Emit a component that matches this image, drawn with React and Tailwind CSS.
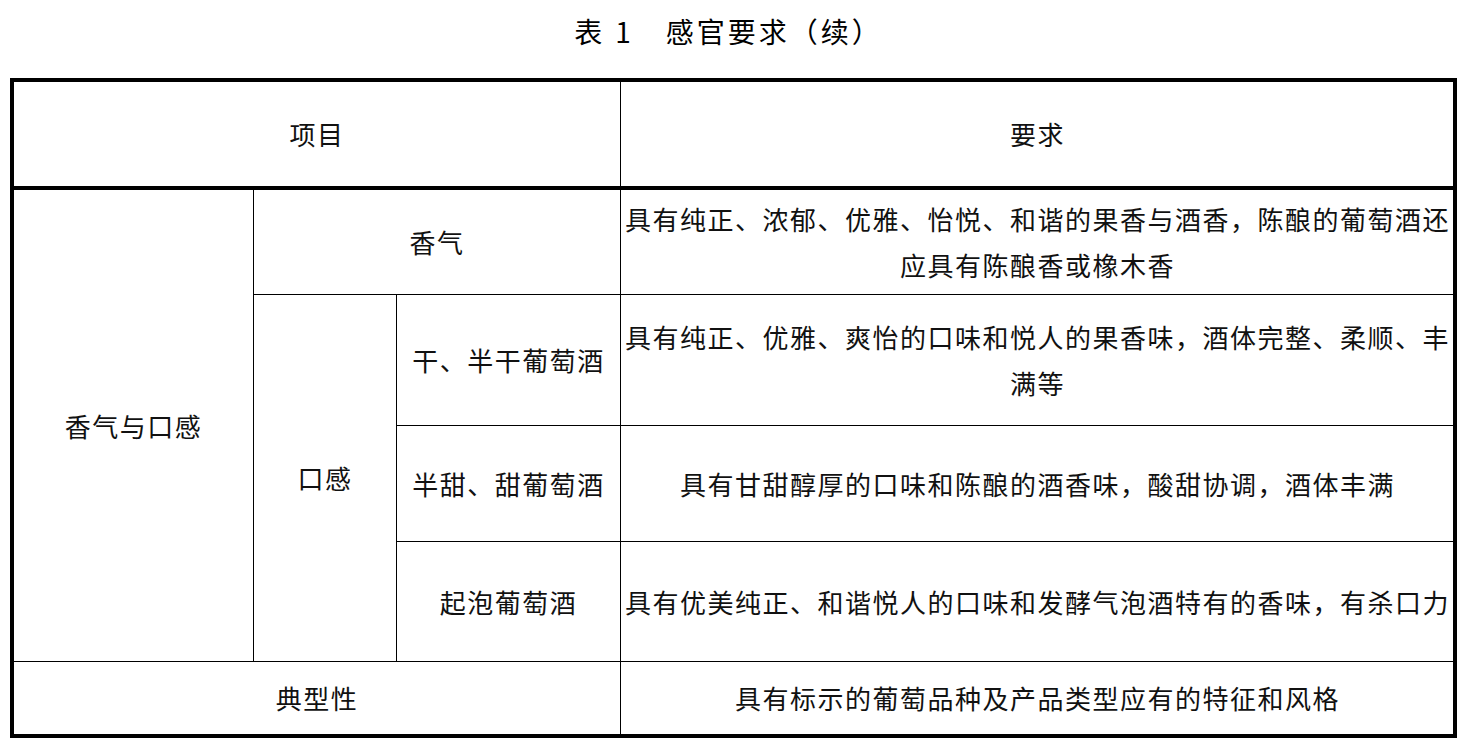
export default function App() {
  const font = { fontFamily: '"Noto Sans CJK SC", "Noto Sans", sans-serif' };
  const cell = "flex items-center justify-center text-center border-black";
  const body = "text-[26px] tracking-[1.5px] leading-[46px] text-[#111]";

  return (
    <div className="w-[1469px] h-[756px] bg-white" style={font}>
      {/* Title */}
      <div className="pt-[14px] mb-[30px] pr-[12px] text-center text-[28px] leading-[34px] font-normal text-black tracking-[3px]">
        <span>表</span>
        <span className="ml-[10px]">1</span>
        <span className="ml-[32px]">感官要求（续）</span>
      </div>

      {/* Table */}
      <div
        className={`ml-[10px] w-[1447px] border-4 border-black grid grid-cols-[240px_143px_224px_1fr] grid-rows-[108px_105px_131px_116px_120px_72px] ${body}`}
      >
        <div className={`${cell} col-span-3 border-r border-b-4`}>项目</div>
        <div className={`${cell} border-b-4`}>要求</div>

        <div className={`${cell} row-span-4 border-r border-b`}>香气与口感</div>
        <div className={`${cell} col-span-2 border-r border-b`}>香气</div>
        <div className={`${cell} flex-col border-b px-[4px]`}>
          <span className="whitespace-nowrap">具有纯正、浓郁、优雅、怡悦、和谐的果香与酒香，陈酿的葡萄酒还</span>
          <span className="whitespace-nowrap">应具有陈酿香或橡木香</span>
        </div>

        <div className={`${cell} row-span-3 border-r border-b`}>口感</div>
        <div className={`${cell} border-r border-b`}>干、半干葡萄酒</div>
        <div className={`${cell} flex-col border-b px-[4px]`}>
          <span className="whitespace-nowrap">具有纯正、优雅、爽怡的口味和悦人的果香味，酒体完整、柔顺、丰</span>
          <span className="whitespace-nowrap">满等</span>
        </div>

        <div className={`${cell} border-r border-b`}>半甜、甜葡萄酒</div>
        <div className={`${cell} border-b px-[4px]`}>具有甘甜醇厚的口味和陈酿的酒香味，酸甜协调，酒体丰满</div>

        <div className={`${cell} border-r border-b`}>起泡葡萄酒</div>
        <div className={`${cell} border-b px-[4px]`}>
          <span className="whitespace-nowrap">具有优美纯正、和谐悦人的口味和发酵气泡酒特有的香味，有杀口力</span>
        </div>

        <div className={`${cell} col-span-3 border-r`}>典型性</div>
        <div className={`${cell}`}>具有标示的葡萄品种及产品类型应有的特征和风格</div>
      </div>
    </div>
  );
}
